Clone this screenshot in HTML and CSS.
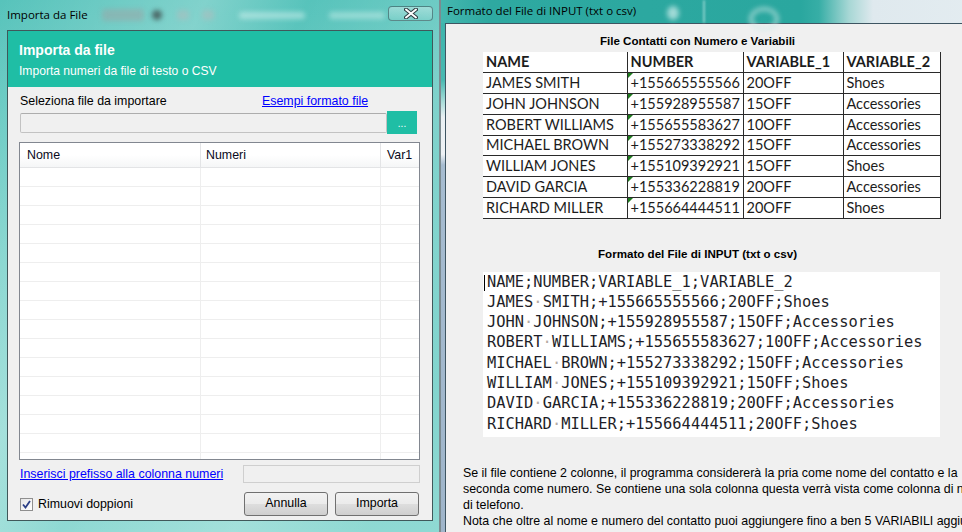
FILE: index.html
```html
<!DOCTYPE html>
<html lang="it">
<head>
<meta charset="utf-8">
<title>Importa da File</title>
<link rel="stylesheet" href="styles.css">
</head>
<body>
<div class="desk">
  <div class="win win-left">
    <div class="titlebar">
      <span class="ttl">Importa da File</span>
      <div class="glass-blob b1"></div>
      <div class="glass-blob b2"></div>
      <div class="glass-blob b3"></div>
      <div class="glass-blob b4"></div>
      <div class="glass-blob b5"></div>
      <div class="glass-blob b6"></div>
      <div class="close-btn">
        <svg width="14" height="11" viewBox="0 0 14 11"><path d="M2 1.5 L12 9.5 M12 1.5 L2 9.5" stroke="#2d3b40" stroke-width="4" stroke-linecap="round"/><path d="M2 1.5 L12 9.5 M12 1.5 L2 9.5" stroke="#ffffff" stroke-width="2" stroke-linecap="round"/></svg>
      </div>
    </div>
    <div class="client">
      <div class="hdr">
        <div class="hdr-title">Importa da file</div>
        <div class="hdr-sub">Importa numeri da file di testo o CSV</div>
      </div>
      <div class="body">
        <div class="row-label">
          <span>Seleziona file da importare</span>
          <a class="link">Esempi formato file</a>
        </div>
        <div class="row-pick">
          <div class="field"></div>
          <div class="btn-dots">...</div>
        </div>
        <div class="grid">
          <div class="grow ghead"><div class="gc c1">Nome</div><div class="gc c2">Numeri</div><div class="gc c3">Var1</div></div>
          <div class="grow"><div class="gc c1"></div><div class="gc c2"></div><div class="gc c3"></div></div>
          <div class="grow"><div class="gc c1"></div><div class="gc c2"></div><div class="gc c3"></div></div>
          <div class="grow"><div class="gc c1"></div><div class="gc c2"></div><div class="gc c3"></div></div>
          <div class="grow"><div class="gc c1"></div><div class="gc c2"></div><div class="gc c3"></div></div>
          <div class="grow"><div class="gc c1"></div><div class="gc c2"></div><div class="gc c3"></div></div>
          <div class="grow"><div class="gc c1"></div><div class="gc c2"></div><div class="gc c3"></div></div>
          <div class="grow"><div class="gc c1"></div><div class="gc c2"></div><div class="gc c3"></div></div>
          <div class="grow"><div class="gc c1"></div><div class="gc c2"></div><div class="gc c3"></div></div>
          <div class="grow"><div class="gc c1"></div><div class="gc c2"></div><div class="gc c3"></div></div>
          <div class="grow"><div class="gc c1"></div><div class="gc c2"></div><div class="gc c3"></div></div>
          <div class="grow"><div class="gc c1"></div><div class="gc c2"></div><div class="gc c3"></div></div>
          <div class="grow"><div class="gc c1"></div><div class="gc c2"></div><div class="gc c3"></div></div>
          <div class="grow"><div class="gc c1"></div><div class="gc c2"></div><div class="gc c3"></div></div>
          <div class="grow"><div class="gc c1"></div><div class="gc c2"></div><div class="gc c3"></div></div>
          <div class="grow"><div class="gc c1"></div><div class="gc c2"></div><div class="gc c3"></div></div>
          <div class="grow"><div class="gc c1"></div><div class="gc c2"></div><div class="gc c3"></div></div>
        </div>
        <div class="row-prefix">
          <a class="link">Inserisci prefisso alla colonna numeri</a>
          <div class="field small"></div>
        </div>
        <div class="row-actions">
          <label class="chk"><span class="cbox"><svg width="9" height="9" viewBox="0 0 9 9"><path d="M1 4.5 L3.5 7.5 L8 1" fill="none" stroke="#2b3f86" stroke-width="1.8"/></svg></span>Rimuovi doppioni</label>
          <div class="btns">
            <div class="btn">Annulla</div>
            <div class="btn">Importa</div>
          </div>
        </div>
      </div>
    </div>
  </div>

  <div class="win win-right">
    <div class="titlebar tb-right">
      <span class="ttl">Formato del File di INPUT (txt o csv)</span>
      <div class="glass-blob r1"></div>
      <div class="glass-blob r2"></div>
      <div class="glass-blob r3"></div>
    </div>
    <div class="client client-right">
      <div class="sheet">
        <div class="cap">File Contatti con Numero e Variabili</div>
        <table class="xls">
          <colgroup><col class="w1"><col class="w2"><col class="w3"><col class="w4"></colgroup>
          <tr class="th"><td>NAME</td><td>NUMBER</td><td>VARIABLE_1</td><td>VARIABLE_2</td></tr>
          <tr><td>JAMES SMITH</td><td class="num">+155665555566</td><td>20OFF</td><td>Shoes</td></tr>
          <tr><td>JOHN JOHNSON</td><td class="num">+155928955587</td><td>15OFF</td><td>Accessories</td></tr>
          <tr><td>ROBERT WILLIAMS</td><td class="num">+155655583627</td><td>10OFF</td><td>Accessories</td></tr>
          <tr><td>MICHAEL BROWN</td><td class="num">+155273338292</td><td>15OFF</td><td>Accessories</td></tr>
          <tr><td>WILLIAM JONES</td><td class="num">+155109392921</td><td>15OFF</td><td>Shoes</td></tr>
          <tr><td>DAVID GARCIA</td><td class="num">+155336228819</td><td>20OFF</td><td>Accessories</td></tr>
          <tr><td>RICHARD MILLER</td><td class="num">+155664444511</td><td>20OFF</td><td>Shoes</td></tr>
        </table>
        <div class="cap cap2">Formato del File di INPUT (txt o csv)</div>
        <div class="code"><span class="caret"></span><div class="ln">NAME;NUMBER;VARIABLE_1;VARIABLE_2</div><div class="ln">JAMES<span class="sp">·</span>SMITH;+155665555566;20OFF;Shoes</div><div class="ln">JOHN<span class="sp">·</span>JOHNSON;+155928955587;15OFF;Accessories</div><div class="ln">ROBERT<span class="sp">·</span>WILLIAMS;+155655583627;10OFF;Accessories</div><div class="ln">MICHAEL<span class="sp">·</span>BROWN;+155273338292;15OFF;Accessories</div><div class="ln">WILLIAM<span class="sp">·</span>JONES;+155109392921;15OFF;Shoes</div><div class="ln">DAVID<span class="sp">·</span>GARCIA;+155336228819;20OFF;Accessories</div><div class="ln">RICHARD<span class="sp">·</span>MILLER;+155664444511;20OFF;Shoes</div></div>
      </div>
      <p class="note">Se il file contiene 2 colonne, il programma considererà la pria come nome del contatto e la<br>seconda come numero. Se contiene una sola colonna questa verrà vista come colonna di numeri<br>di telefono.<br>Nota che oltre al nome e numero del contatto puoi aggiungere fino a ben 5 VARIABILI aggiuntive</p>
    </div>
  </div>
</div>
</body>
</html>
```

FILE: styles.css
```css
html, body {
  margin: 0;
  padding: 0;
}
body {
  width: 962px;
  height: 532px;
  overflow: hidden;
  font-family: "Liberation Sans", Arial, sans-serif;
  font-size: 12.4px;
  color: #000;
  background: #5fc3bb;
}
.desk {
  display: flex;
  height: 532px;
}
.win {
  flex-shrink: 0;
  display: flex;
  flex-direction: column;
  box-sizing: border-box;
}

/* ---------- left window ---------- */
.win-left {
  width: 441px;
  height: 532px;
  padding: 0 6px 11px 7px;
  background:
    linear-gradient(115deg, rgba(255,255,255,0) 0%, rgba(255,255,255,0.25) 30%, rgba(255,255,255,0) 45%, rgba(255,255,255,0.18) 70%, rgba(255,255,255,0) 90%),
    linear-gradient(180deg, #57c3bb 0%, #78d1ca 50%, #8fd9d3 100%);
  border-right: 2px solid #7c8b90;
}
.titlebar {
  height: 30px;
  flex: none;
  position: relative;
  display: flex;
  align-items: center;
}
.win-left .titlebar .ttl {
  font-family: "Open Sans", "Noto Sans", sans-serif;
  font-size: 11.5px;
  color: #000;
  margin-top: -13px;
  line-height: 30px;
  position: relative;
  top: 6px;
}
.ttl {
  white-space: nowrap;
  position: relative;
  z-index: 2;
}
.glass-blob {
  position: absolute;
  filter: blur(2.5px);
  border-radius: 3px;
}
.b1 { left: 95px; top: 9px; width: 42px; height: 12px; background: rgba(150,170,170,0.6); }
.b2 { left: 145px; top: 10px; width: 10px; height: 10px; border-radius: 50%; background: rgba(60,70,70,0.75); }
.b3 { left: 170px; top: 10px; width: 12px; height: 10px; background: rgba(170,190,190,0.6); }
.b4 { left: 195px; top: 10px; width: 12px; height: 10px; background: rgba(170,190,190,0.6); }
.b5 { left: 232px; top: 12px; width: 66px; height: 7px; background: rgba(230,250,248,0.45); }
.b6 { left: 322px; top: 12px; width: 56px; height: 7px; background: rgba(230,250,248,0.4); }
.close-btn {
  position: absolute;
  right: 0;
  top: 6px;
  width: 45px;
  height: 15px;
  border: 1px solid rgba(40,70,75,0.55);
  border-radius: 4px;
  background: linear-gradient(180deg, rgba(255,255,255,0.35), rgba(255,255,255,0.1));
  display: flex;
  justify-content: center;
  align-items: flex-start;
  padding-top: 1px;
  box-sizing: border-box;
}
.client {
  flex: 1;
  border: 1px solid #40585a;
  background: #f0f0f0;
  display: flex;
  flex-direction: column;
  min-height: 0;
}
.hdr {
  height: 56px;
  flex: none;
  background: #1fbea5;
  color: #fff;
  padding: 10px 0 0 11px;
  box-sizing: border-box;
}
.hdr-title {
  font-weight: bold;
  font-size: 14px;
  line-height: 18px;
}
.hdr-sub {
  font-size: 12.1px;
  line-height: 18px;
  margin-top: 3px;
}
.body {
  padding: 0 0 0 11px;
  display: flex;
  flex-direction: column;
}
.row-label {
  display: grid;
  grid-template-columns: 242px auto;
  margin-top: 7px;
  line-height: 14px;
  height: 14px;
  padding-left: 1px;
}
.link {
  color: #0000ff;
  text-decoration: underline;
  white-space: nowrap;
}
.row-pick {
  display: flex;
  margin-top: 3px;
  height: 23px;
}
.field {
  box-sizing: border-box;
  border: 1px solid #c2c2c2;
  border-top-color: #adadad;
  border-radius: 2px;
  background: #f0f0f0;
}
.row-pick .field {
  width: 367px;
  height: 20px;
  margin: 2px 0 0 1px;
}
.btn-dots {
  width: 30px;
  height: 23px;
  background: #1fbea5;
  color: #fff;
  font-size: 10px;
  text-align: center;
  line-height: 26px;
}
.grid {
  margin-top: 8px;
  width: 401px;
  height: 318px;
  box-sizing: border-box;
  border: 1px solid #828790;
  background: #fff;
  overflow: hidden;
}
.grow {
  display: flex;
  height: 19px;
  box-sizing: border-box;
  border-bottom: 1px solid #eeeeee;
}
.ghead {
  height: 25px;
  background: linear-gradient(180deg, #ffffff 0%, #ffffff 50%, #f5f6f7 100%);
  border-bottom: 1px solid #e3e4e6;
}
.gc {
  box-sizing: border-box;
  border-right: 1px solid #eeeeee;
  padding-left: 6px;
  line-height: 25px;
  white-space: nowrap;
}
.ghead .gc { border-right-color: #e3e4e6; color: #0a0a20; }
.c1 { width: 181px; padding-left: 7px; }
.c2 { width: 180px; padding-left: 5px; }
.c3 { flex: 1; border-right: none; }
.row-prefix {
  display: grid;
  grid-template-columns: 224px 177px;
  margin-top: 5px;
  height: 18px;
  align-items: center;
}
.row-prefix .link { padding-left: 1px; }
.field.small {
  height: 18px;
  border-radius: 0;
  border-color: #cfcfcf;
}
.row-actions {
  display: flex;
  justify-content: space-between;
  align-items: center;
  margin-top: 9px;
  height: 24px;
  width: 400px;
}
.chk {
  display: flex;
  align-items: center;
  padding-left: 1px;
}
.cbox {
  width: 13px;
  height: 13px;
  box-sizing: border-box;
  border: 1px solid #8f8f8f;
  background: linear-gradient(135deg, #e6e6e6, #ffffff);
  display: flex;
  align-items: center;
  justify-content: center;
  margin-right: 5px;
}
.btns {
  display: flex;
  gap: 7px;
}
.btn {
  width: 84px;
  height: 24px;
  box-sizing: border-box;
  border: 1px solid #707070;
  border-radius: 3px;
  background: linear-gradient(180deg, #f2f2f2 0%, #ebebeb 48%, #dddddd 52%, #cfcfcf 100%);
  text-align: center;
  line-height: 21px;
  color: #000;
}

/* ---------- right window ---------- */
.win-right {
  width: 600px;
  height: 532px;
  padding-left: 4px;
  background: linear-gradient(180deg, #3ab3aa 0%, #48b9b1 15%, #a6dcd8 19%, #e9f0f3 22%, #eef2f5 29%, #a6bcd0 31%, #9fb5ca 100%);
}
.tb-right {
  height: 23px;
  margin-left: -4px;
  padding-left: 6px;
  background: linear-gradient(90deg, #45b7af 0%, #2ea9a1 8%, #2aa79f 60%, #37aea6 63%, #a7d7d5 68%, #dfe9ee 72%, #e6eef2 100%);
}
.tb-right .ttl {
  font-family: "Open Sans", "Noto Sans", sans-serif;
  font-size: 11.5px;
  color: #000;
  line-height: 21px;
  align-self: flex-start;
}
.r1 { left: 226px; top: 6px; width: 12px; height: 14px; border-radius: 50%; background: rgba(210,240,238,0.7); }
.r2 { left: 262px; top: 0; width: 2px; height: 23px; background: rgba(220,245,243,0.5); filter: blur(1px); }
.r3 { left: 308px; top: 7px; width: 22px; height: 16px; border-radius: 50%; border: 4px solid rgba(210,235,234,0.6); background: transparent; }
.client-right {
  border: none;
  border-left: 1px solid #3e5562;
  border-top: 1px solid #3e5562;
  background: #f0f0f0;
}
.sheet {
  margin-left: 37px;
  width: 457px;
  padding-top: 8px;
}
.cap {
  font-weight: bold;
  font-size: 11.6px;
  line-height: 18px;
  height: 18px;
  text-align: center;
  padding-right: 28px;
  color: #000;
}
.xls {
  margin-top: 2px;
  border-collapse: collapse;
  table-layout: fixed;
  width: 457px;
  background: #fff;
  font-family: Lato, "Liberation Sans", sans-serif;
  font-size: 14.5px;
  color: #1c1c1c;
}
.w1 { width: 144px; }
.w2 { width: 116px; }
.w3 { width: 100px; }
.w4 { width: 97px; }
.xls tr { height: 20.75px; }
.xls td {
  padding: 0 0 0 3px;
  border-right: 1px solid #2a2a2a;
  border-bottom: 1px solid #2a2a2a;
  white-space: nowrap;
  overflow: hidden;
  vertical-align: middle;
  line-height: 18px;
}
.xls tr td:first-child { border-left: none; }
.xls .th td { font-weight: bold; }
.xls td.num { position: relative; }
.xls td.num::before {
  content: "";
  position: absolute;
  left: 0;
  top: 0;
  border-top: 5px solid #1e7b1e;
  border-right: 5px solid transparent;
}
.cap2 { margin-top: 26px; }
.code {
  margin-top: 9px;
  height: 165px;
  background: #fff;
  position: relative;
  padding-left: 4px;
  box-sizing: border-box;
  font-family: "DejaVu Sans Mono", "Liberation Mono", monospace;
  font-size: 15.4px;
  color: #1e1e28;
}
.ln {
  line-height: 20.3px;
  height: 20.3px;
  white-space: pre;
}
.sp { color: #b5aaa3; }
.caret {
  position: absolute;
  left: 1px;
  top: 3px;
  width: 1px;
  height: 16px;
  background: #000;
}
.note {
  margin: 28px 0 0 17px;
  font-size: 12.4px;
  line-height: 16px;
  white-space: nowrap;
  color: #000;
}
```
